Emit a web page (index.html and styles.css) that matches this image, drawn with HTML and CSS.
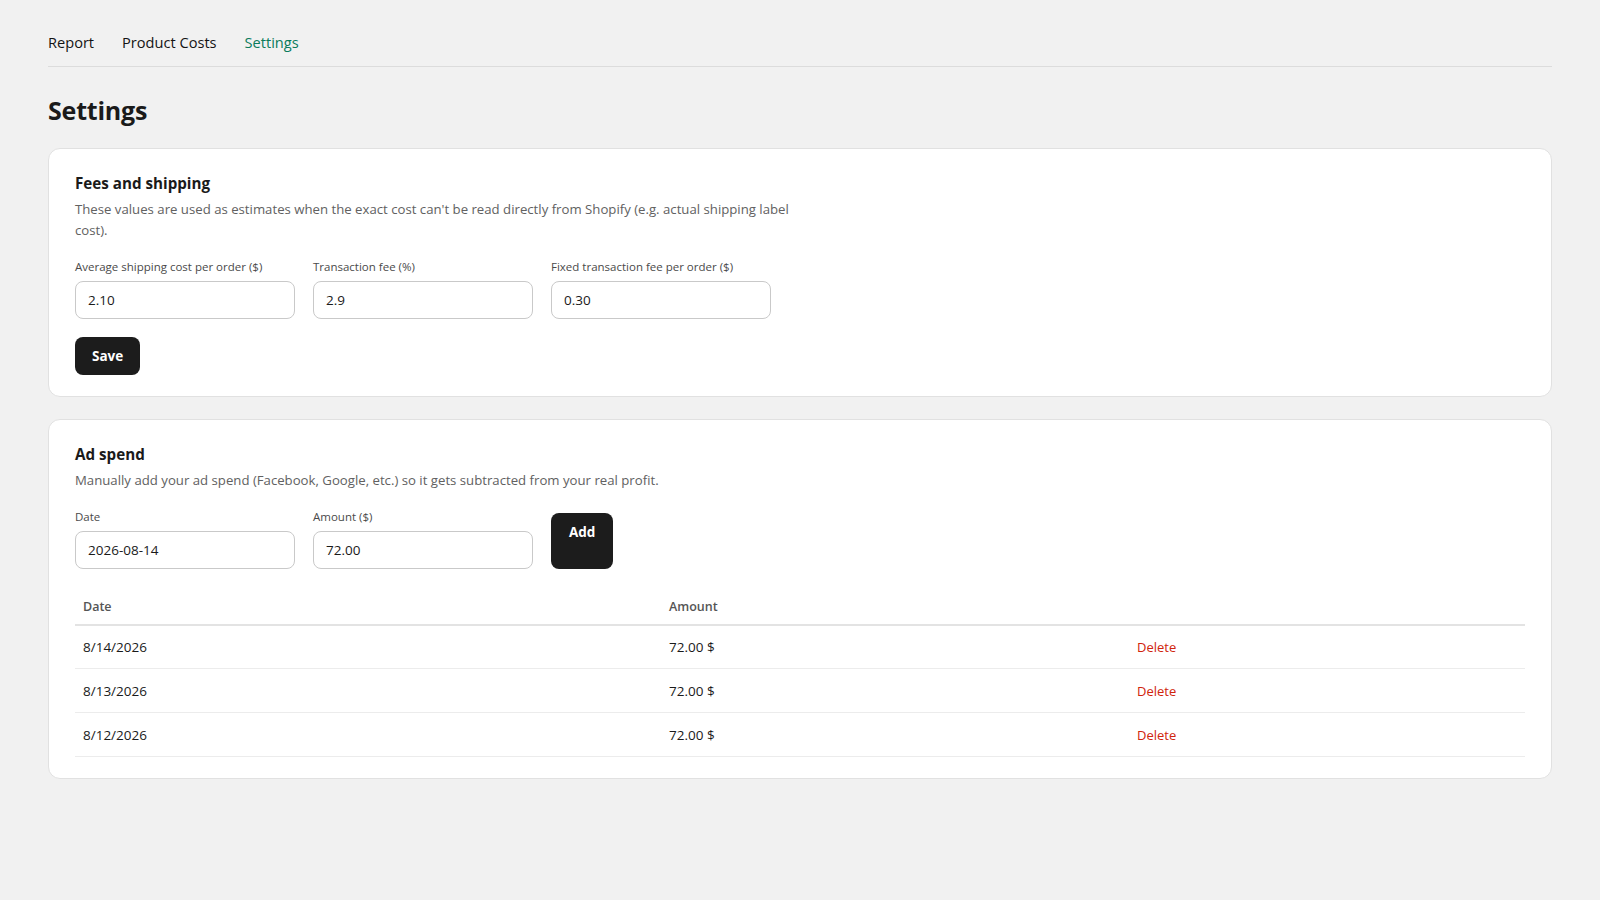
FILE: index.html
```html
<!DOCTYPE html>
<html lang="en">
<head>
<meta charset="utf-8">
<title>Settings</title>
<link rel="stylesheet" href="styles.css">
</head>
<body>
<div class="page">
  <nav class="tabs">
    <a class="tab" href="#">Report</a>
    <a class="tab" href="#">Product Costs</a>
    <a class="tab active" href="#">Settings</a>
  </nav>

  <h1 class="page-title">Settings</h1>

  <section class="card">
    <h2 class="card-title">Fees and shipping</h2>
    <p class="card-desc">These values are used as estimates when the exact cost can't be read directly from Shopify (e.g. actual shipping label cost).</p>
    <div class="fields">
      <label class="field">
        <span class="field-label">Average shipping cost per order ($)</span>
        <input class="input" type="text" value="2.10">
      </label>
      <label class="field">
        <span class="field-label">Transaction fee (%)</span>
        <input class="input" type="text" value="2.9">
      </label>
      <label class="field">
        <span class="field-label">Fixed transaction fee per order ($)</span>
        <input class="input" type="text" value="0.30">
      </label>
    </div>
    <button class="btn">Save</button>
  </section>

  <section class="card">
    <h2 class="card-title">Ad spend</h2>
    <p class="card-desc">Manually add your ad spend (Facebook, Google, etc.) so it gets subtracted from your real profit.</p>
    <div class="fields add-row">
      <label class="field">
        <span class="field-label">Date</span>
        <input class="input" type="text" value="2026-08-14">
      </label>
      <label class="field">
        <span class="field-label">Amount ($)</span>
        <input class="input" type="text" value="72.00">
      </label>
      <button class="btn btn-add">Add</button>
    </div>

    <table class="table">
      <thead>
        <tr><th class="col-date">Date</th><th class="col-amount">Amount</th><th></th></tr>
      </thead>
      <tbody>
        <tr><td>8/14/2026</td><td>72.00 $</td><td><a class="delete" href="#">Delete</a></td></tr>
        <tr><td>8/13/2026</td><td>72.00 $</td><td><a class="delete" href="#">Delete</a></td></tr>
        <tr><td>8/12/2026</td><td>72.00 $</td><td><a class="delete" href="#">Delete</a></td></tr>
      </tbody>
    </table>
  </section>
</div>
</body>
</html>
```

FILE: styles.css
```css
* { box-sizing: border-box; }

html, body {
  margin: 0;
  padding: 0;
  background: #f1f1f1;
}

body {
  font-family: "Open Sans", "Noto Sans", "Liberation Sans", sans-serif;
  color: #1a1a1a;
}

.page {
  padding: 24px 48px 40px;
}

.tabs {
  display: flex;
  gap: 28px;
  padding: 8px 0 14px;
  border-bottom: 1px solid #dcdcdc;
}

.tab {
  font-size: 14.6px;
  line-height: 20px;
  color: #141414;
  text-decoration: none;
}

.tab.active {
  color: #0a7b5c;
}

.page-title {
  margin: 27px 0 22px;
  font-size: 25px;
  line-height: 32px;
  font-weight: 700;
  letter-spacing: -0.2px;
}

.card {
  background: #ffffff;
  border: 1px solid #e1e1e1;
  border-radius: 12px;
  padding: 23px 26px 21px;
  margin-bottom: 22px;
}

.card-title {
  margin: 0;
  font-size: 15.2px;
  line-height: 22px;
  font-weight: 700;
}

.card-desc {
  margin: 5px 0 0;
  max-width: 720px;
  font-size: 13.2px;
  line-height: 20.5px;
  color: #616161;
}

.fields {
  display: flex;
  gap: 18px;
  margin-top: 20px;
}

.add-row {
  margin-top: 19px;
  align-items: flex-end;
}

.field {
  display: flex;
  flex-direction: column;
  gap: 7px;
  width: 220px;
}

.field-label {
  font-size: 11.5px;
  line-height: 14px;
  color: #4a4a4a;
}

.input {
  height: 38px;
  padding: 0 12px;
  border: 1px solid #c9c9c9;
  border-radius: 8px;
  font-family: inherit;
  font-size: 13.5px;
  color: #1a1a1a;
  background: #fff;
}

.btn {
  margin-top: 18px;
  padding: 10px 17px 10px;
  border: none;
  border-radius: 8px;
  background: #1c1c1c;
  color: #fff;
  font-family: inherit;
  font-size: 13.5px;
  line-height: 18px;
  font-weight: 700;
}

.btn-add {
  margin-top: 0;
  height: 56px;
  display: flex;
  align-items: flex-start;
  justify-content: center;
  padding: 10px 18px;
}

.table {
  width: 100%;
  margin-top: 19px;
  border-collapse: collapse;
  font-size: 13.5px;
}

.table th {
  text-align: left;
  font-weight: 600;
  font-size: 12.5px;
  color: #555;
  padding: 10px 8px 9px;
  line-height: 17px;
  border-bottom: 2px solid #e3e3e3;
}

.col-date { width: 586px; }
.col-amount { width: 468px; }

.table td {
  padding: 0 8px;
  height: 44px;
  border-bottom: 1px solid #ececec;
  color: #1a1a1a;
}

.delete {
  color: #d0240c;
  text-decoration: none;
  font-size: 13px;
}
```
